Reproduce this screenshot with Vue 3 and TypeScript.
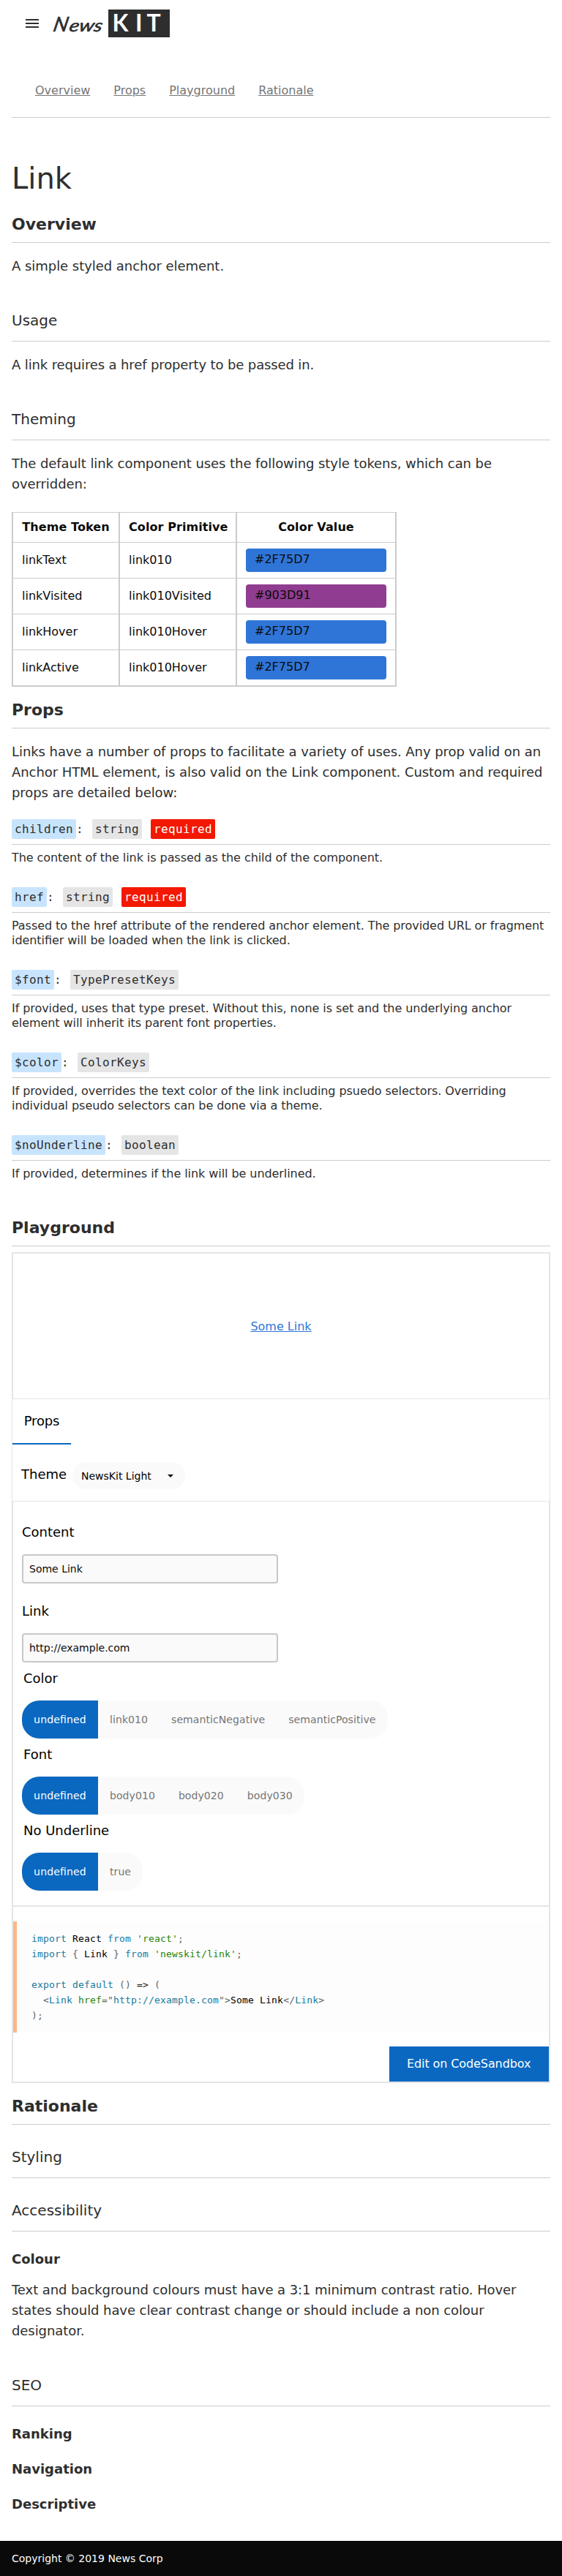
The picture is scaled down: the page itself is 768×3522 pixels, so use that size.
<script setup lang="ts">
import { ref } from 'vue'

interface TokenRow { token: string; primitive: string; value: string }
interface PropDoc { name: string; type: string; required?: boolean; text: string }
interface Choice { label: string; options: string[] }
interface CodePart { kind: string; text: string }

const navLinks: string[] = ['Overview', 'Props', 'Playground', 'Rationale']

const tokens: TokenRow[] = [
  { token: 'linkText', primitive: 'link010', value: '#2F75D7' },
  { token: 'linkVisited', primitive: 'link010Visited', value: '#903D91' },
  { token: 'linkHover', primitive: 'link010Hover', value: '#2F75D7' },
  { token: 'linkActive', primitive: 'link010Hover', value: '#2F75D7' },
]

const propDocs: PropDoc[] = [
  { name: 'children', type: 'string', required: true, text: 'The content of the link is passed as the child of the component.' },
  { name: 'href', type: 'string', required: true, text: 'Passed to the href attribute of the rendered anchor element. The provided URL or fragment identifier will be loaded when the link is clicked.' },
  { name: '$font', type: 'TypePresetKeys', text: 'If provided, uses that type preset. Without this, none is set and the underlying anchor element will inherit its parent font properties.' },
  { name: '$color', type: 'ColorKeys', text: 'If provided, overrides the text color of the link including psuedo selectors. Overriding individual pseudo selectors can be done via a theme.' },
  { name: '$noUnderline', type: 'boolean', text: 'If provided, determines if the link will be underlined.' },
]

const content = ref('Some Link')
const link = ref('http://example.com')

const choices: Choice[] = [
  { label: 'Color', options: ['undefined', 'link010', 'semanticNegative', 'semanticPositive'] },
  { label: 'Font', options: ['undefined', 'body010', 'body020', 'body030'] },
  { label: 'No Underline', options: ['undefined', 'true'] },
]
const selected = ref<number[]>([0, 0, 0])

const k = (text: string): CodePart => ({ kind: 'keyword', text })
const s = (text: string): CodePart => ({ kind: 'string', text })
const p = (text: string): CodePart => ({ kind: 'punct', text })
const t = (text: string): CodePart => ({ kind: 'plain', text })
const o = (text: string): CodePart => ({ kind: 'operator', text })

const code: CodePart[][] = [
  [k('import'), t(' React '), k('from'), t(' '), s("'react'"), p(';')],
  [k('import'), p(' {'), t(' Link '), p('} '), k('from'), t(' '), s("'newskit/link'"), p(';')],
  [t(' ')],
  [k('export'), t(' '), k('default'), p(' () '), o('=>'), p(' (')],
  [p('  <'), k('Link'), t(' '), s('href'), p('="'), k('http://example.com'), p('">'), t('Some Link'), p('</'), k('Link'), p('>')],
  [p(');')],
]
</script>

<template>
  <div class="page">
    <header class="header">
      <svg class="menu" width="18" height="12" viewBox="0 0 18 12" aria-label="Menu">
        <path d="M0 0h18v2H0zM0 5h18v2H0zM0 10h18v2H0z" fill="#2e2e2e" />
      </svg>
      <svg class="logo" width="162" height="40" viewBox="0 0 162 40" aria-label="News KIT">
        <g class="script" transform="translate(6 0) skewX(-12)">
          <text class="initial" x="2" y="31">N</text>
          <text class="rest" x="24" y="31" textLength="45" lengthAdjust="spacingAndGlyphs">ews</text>
        </g>
        <rect x="78" y="1" width="84" height="38" fill="#2e2e2e" />
        <text class="kit" x="83.5 115 130.5" y="31">KIT</text>
      </svg>
    </header>

    <main class="main">
      <nav class="nav">
        <a v-for="item in navLinks" :key="item">{{ item }}</a>
      </nav>

      <h1>Link</h1>

      <h2>Overview</h2>
      <p class="body loose">A simple styled anchor element.</p>

      <h3>Usage</h3>
      <p class="body dense">A link requires a href property to be passed in.</p>

      <h3>Theming</h3>
      <p class="body">The default link component uses the following style tokens, which can be overridden:</p>

      <table class="tokens">
        <colgroup>
          <col class="col-token" />
          <col class="col-primitive" />
          <col class="col-value" />
        </colgroup>
        <thead>
          <tr><th>Theme Token</th><th>Color Primitive</th><th>Color Value</th></tr>
        </thead>
        <tbody>
          <tr v-for="row in tokens" :key="row.token">
            <td>{{ row.token }}</td>
            <td>{{ row.primitive }}</td>
            <td><div class="swatch" :style="{ backgroundColor: row.value }">{{ row.value }}</div></td>
          </tr>
        </tbody>
      </table>

      <h2>Props</h2>
      <p class="body">Links have a number of props to facilitate a variety of uses. Any prop valid on an Anchor HTML element, is also valid on the Link component. Custom and required props are detailed below:</p>

      <div class="docs">
        <section v-for="doc in propDocs" :key="doc.name" class="doc">
          <div class="signature">
            <span class="pill name">{{ doc.name }}</span><span>:</span>
            <span class="pill type">{{ doc.type }}</span>
            <span v-if="doc.required" class="pill required">required</span>
          </div>
          <p>{{ doc.text }}</p>
        </section>
      </div>

      <h2 class="after-docs">Playground</h2>
      <div class="playground">
        <div class="preview"><a>{{ content }}</a></div>
        <div class="tabs"><div class="tab">Props</div></div>
        <div class="theme">
          <span>Theme</span>
          <div class="select">
            <span>NewsKit Light</span>
            <svg width="8" height="4" viewBox="0 0 8 4"><path d="M0 0h8L4 4z" fill="#0a0a0a" /></svg>
          </div>
        </div>
        <div class="controls">
          <label class="field"><span>Content</span><input v-model="content" type="text" /></label>
          <label class="field"><span>Link</span><input v-model="link" type="text" /></label>
          <div v-for="(choice, i) in choices" :key="choice.label" class="choice">
            <div class="choice-label">{{ choice.label }}</div>
            <div class="segments">
              <button
                v-for="(option, j) in choice.options"
                :key="option"
                type="button"
                :class="{ on: selected[i] === j }"
                @click="selected[i] = j"
              >{{ option }}</button>
            </div>
          </div>
        </div>
        <div class="source">
          <div class="code">
            <div v-for="(line, n) in code" :key="n" class="line"><span v-for="(part, m) in line" :key="m" :class="part.kind">{{ part.text }}</span></div>
          </div>
          <a class="sandbox">Edit on CodeSandbox</a>
        </div>
      </div>

      <h2>Rationale</h2>
      <h3 class="tight">Styling</h3>
      <h3 class="tight">Accessibility</h3>
      <h4 class="first">Colour</h4>
      <p class="body after-h4">Text and background colours must have a 3:1 minimum contrast ratio. Hover states should have clear contrast change or should include a non colour designator.</p>
      <h3>SEO</h3>
      <h4 class="first">Ranking</h4>
      <h4>Navigation</h4>
      <h4>Descriptive</h4>
    </main>

    <footer class="footer">Copyright © 2019 News Corp</footer>
  </div>
</template>

<style>
body {
  margin: 0;
  background: #fff;
}
</style>

<style scoped>
.page {
  font-family: "DejaVu Sans", sans-serif;
  font-size: 16px;
  font-feature-settings: "liga" 1;
  color: #2e2e2e;
}
.page * {
  box-sizing: border-box;
}
.header {
  display: flex;
  align-items: center;
  gap: 17px;
  height: 64px;
  padding-left: 35px;
}
.menu {
  display: block;
}
.logo {
  display: block;
}
.script {
  font-family: Lato, sans-serif;
  font-style: italic;
  font-weight: 400;
  fill: #2e2e2e;
  stroke: #2e2e2e;
  stroke-width: 0.6px;
}
.initial {
  font-size: 28px;
}
.rest {
  font-size: 23px;
}
.kit {
  font: 700 32px Lato, sans-serif;
  fill: #fff;
}
.main {
  padding: 0 16px;
}
.nav {
  display: flex;
  gap: 32px;
  height: 97px;
  padding: 50px 32px 0;
  border-bottom: 1px solid #ccc;
  line-height: 20px;
}
.nav a {
  color: #757575;
  text-decoration: underline;
}
h1,
h2,
h3,
h4,
p {
  margin: 0;
}
h1 {
  margin: 59px 0 7px;
  font-size: 40px;
  font-weight: 400;
  line-height: 48px;
}
h2 {
  margin-top: 19px;
  padding-bottom: 12px;
  border-bottom: 1px solid #ccc;
  font-size: 22px;
  line-height: 25px;
}
h1 + h2 {
  margin-top: 26px;
}
h3 {
  margin-top: 48px;
  padding-bottom: 16px;
  border-bottom: 1px solid #ccc;
  font-size: 20px;
  font-weight: 400;
  line-height: 24px;
}
h3.tight {
  margin-top: 32px;
}
h4 {
  margin-top: 24px;
  font-size: 18px;
  line-height: 24px;
}
h4.first {
  margin-top: 26px;
}
.body {
  margin-top: 18px;
  font-size: 18px;
  line-height: 28px;
  letter-spacing: -0.07px;
}
.body.loose {
  letter-spacing: -0.04px;
}
.body.dense {
  letter-spacing: -0.13px;
}
.body.after-h4 {
  margin-top: 16px;
}
.tokens {
  width: 526px;
  margin-top: 24px;
  border: 1px solid #ccc;
  border-spacing: 0;
  table-layout: fixed;
  color: #0a0a0a;
  line-height: 24px;
}
.col-token {
  width: 146px;
}
.col-primitive {
  width: 160px;
}
.col-value {
  width: 218px;
}
.tokens th,
.tokens td {
  padding: 8px 12px;
  border: solid #ccc;
  border-width: 0 1px 1px;
  white-space: nowrap;
}
.tokens th {
  letter-spacing: 0.08px;
}
.swatch {
  width: 192px;
  height: 32px;
  padding: 3px 12px 0;
  border-radius: 4px;
}
.docs {
  margin-top: 22px;
}
.doc + .doc {
  margin-top: 30px;
}
.signature {
  display: flex;
  height: 35px;
  border-bottom: 1px solid #ccc;
  font-family: "DejaVu Sans Mono", monospace;
  line-height: 27px;
  letter-spacing: 0.37px;
}
.pill {
  height: 27px;
  padding: 0 4px;
  border-radius: 2px;
}
.name {
  background: #c8e4fd;
}
.type {
  margin-left: 12px;
  background: #e5e5e5;
}
.required {
  margin-left: 12px;
  background: #f31800;
  color: #fff;
}
.doc p {
  margin-top: 8px;
  line-height: 20px;
  letter-spacing: -0.065px;
}
.after-docs {
  margin-top: 51px;
}
.playground {
  margin-top: 8px;
  border: 1px solid #e5e5e5;
  color: #0a0a0a;
}
.preview {
  display: flex;
  align-items: center;
  justify-content: center;
  height: 200px;
  border: 1px solid #e5e5e5;
}
.preview a {
  color: #2f75d7;
  text-decoration: underline;
}
.tabs {
  display: flex;
}
.tab {
  width: 80px;
  height: 62px;
  padding-top: 18px;
  border-bottom: 2px solid #0a68c1;
  font-size: 18px;
  line-height: 24px;
  letter-spacing: -0.15px;
  text-align: center;
  color: #000;
}
.theme {
  display: flex;
  height: 77px;
  padding: 24px 12px 0;
  color: #000;
}
.theme > span {
  width: 70px;
  padding-top: 5px;
  font-size: 18px;
  line-height: 24px;
}
.select {
  display: flex;
  align-items: center;
  justify-content: space-between;
  width: 154px;
  height: 37px;
  padding: 0 16px 0 12px;
  border-radius: 18px;
  background: #fafafa;
  font-size: 14px;
}
.controls {
  height: 554px;
  padding: 30px 12px 0;
  border: 1px solid #e5e5e5;
}
.field {
  display: block;
  height: 108px;
  font-size: 18px;
  line-height: 24px;
  color: #000;
}
.field:nth-child(2) {
  height: 92px;
}
.field span {
  display: block;
}
.field input {
  display: block;
  width: 350px;
  height: 40px;
  margin-top: 18px;
  padding: 0 8px;
  border: 2px solid #c8c8c8;
  border-radius: 4px;
  background: #fafafa;
  color: #0a0a0a;
  font: 14px "DejaVu Sans", sans-serif;
}
.choice {
  height: 104px;
  font-size: 18px;
  line-height: 24px;
  color: #000;
}
.choice-label {
  margin-bottom: 18px;
  padding-left: 2px;
}
.segments {
  display: flex;
  width: max-content;
  height: 52px;
  overflow: hidden;
  border-radius: 24px;
  background: #fafafa;
}
.segments button {
  padding: 0 16px;
  border: 0;
  background: transparent;
  color: #757575;
  font: 14px "DejaVu Sans", sans-serif;
  font-feature-settings: "liga" 1;
  letter-spacing: 0.08px;
}
.segments button:first-child {
  width: 104px;
  letter-spacing: 0.17px;
}
.segments button.on {
  background: #0a68c1;
  color: #fff;
}
.source {
  display: flex;
  flex-direction: column;
  align-items: flex-end;
  border: 1px solid #e5e5e5;
}
.code {
  align-self: stretch;
  height: 152px;
  margin: 20px 0 19px;
  padding: 13px 20px;
  border-left: 5px solid #fab887;
  background: #fdfdfd;
  font-family: "DejaVu Sans Mono", monospace;
  font-size: 13px;
  letter-spacing: 0.174px;
}
.line {
  height: 21px;
  line-height: 21px;
  white-space: pre;
}
.plain {
  color: #000;
}
.keyword {
  color: #157a9c;
}
.string {
  color: #27830a;
}
.punct {
  color: #5f6364;
}
.operator {
  color: #2e2110;
  background: #fff;
}
.sandbox {
  width: 218px;
  height: 48px;
  padding-left: 24px;
  background: #0a68c1;
  color: #fff;
  line-height: 47px;
  letter-spacing: -0.1px;
  white-space: nowrap;
}
.footer {
  height: 48px;
  margin-top: 38px;
  padding-left: 16px;
  background: #0a0a0a;
  color: #fff;
  font-size: 14px;
  line-height: 48px;
}
</style>
